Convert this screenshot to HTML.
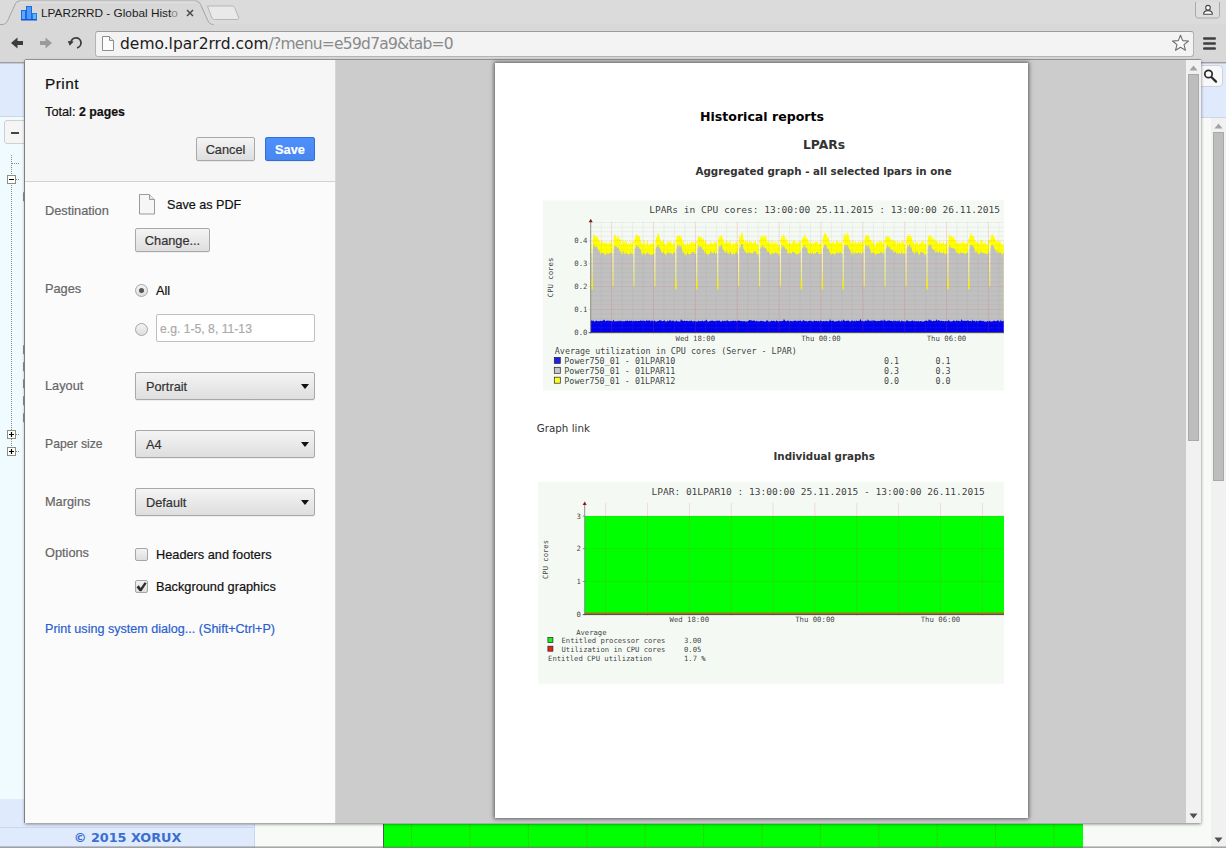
<!DOCTYPE html>
<html>
<head>
<meta charset="utf-8">
<title>LPAR2RRD - Global Historical reports</title>
<style>
*{box-sizing:border-box;margin:0;padding:0}
html,body{width:1226px;height:848px;overflow:hidden}
body{position:relative;background:#f7faf7;font-family:"DejaVu Sans","Liberation Sans",sans-serif;color:#222}
.abs{position:absolute}
/* ---------- browser chrome ---------- */
#tabbar{left:0;top:0;width:1226px;height:25px;background:#dbdbdb}
#toolbar{left:0;top:24px;width:1226px;height:39px;background:#d8d8d8}
#chromeline{left:0;top:62px;width:1226px;height:1px;background:#9f9f9f;box-shadow:0 1px 0 rgba(140,140,150,.35)}
#tabtxt{left:41px;top:5px;font-family:"Liberation Sans","DejaVu Sans",sans-serif;font-size:11.8px;line-height:16px;color:#1c1c1c;white-space:nowrap}
#urlbox{left:95px;top:31px;width:1099px;height:26px;background:#f3f3f3;border:1px solid #b3b3b3;border-top-color:#9c9c9c;border-radius:3px}
#url{left:120px;top:33px;font-size:15.5px;line-height:22px;color:#1c1c1c;white-space:nowrap;letter-spacing:0}
#url span{color:#8a8a8a;letter-spacing:-.75px}
/* ---------- page behind ---------- */
#bg-left-top{left:0;top:60px;width:25px;height:57px;background:#dfeafc;border-bottom:1px solid #c9d6ef}
#bg-left{left:0;top:118px;width:25px;height:681px;background:#effbff}
#bg-left-bot{left:0;top:799px;width:25px;height:25px;background:#dfeafc}
#foot-l{left:0;top:824px;width:255px;height:24px;background:linear-gradient(#dfeafc 3px,#c9d6ef 3px,#c9d6ef 4px,#dfeafc 4px);border-right:1px solid #c9d6ef}
#foot-txt{left:0;top:830px;width:255px;text-align:center;font-size:12.8px;font-weight:bold;color:#3a6fd0;line-height:16px}
#foot-green{left:383px;top:824px;width:700px;height:24px;background:#00ff00}
#bg-right-top{left:1200px;top:60px;width:26px;height:57px;background:#dfeafc}
/* ---------- dialog ---------- */
#dlg{left:25px;top:60px;width:1176px;height:763px;background:#ccc;box-shadow:0 1px 3px rgba(0,0,0,.5),-1px 0 0 #9c9ca4,0 -1px 0 #9f9f9f}
#side{left:0;top:0;width:311px;height:763px;background:#fbfbfb;border-right:1px solid #d6d6d6}
#sidehead{left:0;top:0;width:310px;height:122px;background:#f6f6f6;border-bottom:1px solid #d2d2d2}
.btn.t{margin-top:0;height:24px;border:1px solid #a8a8a8;border-radius:2px;background:linear-gradient(#f4f4f4,#dedede);text-align:center;line-height:24px;box-shadow:0 1px 0 rgba(0,0,0,.05)}
#save.t{color:#fff;font-weight:bold;background:linear-gradient(#4d90fe,#4787ed);border-color:#2f6ce0}
.sel.t{margin-top:0;left:110px;width:180px;height:28px;border:1px solid #a8a8a8;border-radius:2px;background:linear-gradient(#f4f4f4,#dedede);line-height:27px;padding-left:10px;color:#333;box-shadow:0 1px 0 rgba(0,0,0,.05)}
.sel:after{content:"";position:absolute;right:5px;top:11px;border:4.5px solid transparent;border-top:5px solid #111;border-bottom:none}
/* preview */
#paper{left:470px;top:3px;width:533px;height:755px;background:#fff;box-shadow:0 0 4px 1px rgba(0,0,0,.55)}
.doc{font-family:"DejaVu Sans","Liberation Sans",sans-serif;white-space:nowrap;color:#333}
.mono{font-family:"DejaVu Sans Mono","Liberation Mono",monospace;white-space:nowrap;color:#111}

.t{position:absolute;margin-top:1px;-webkit-text-stroke:.2px;white-space:nowrap;font-family:"Liberation Sans","DejaVu Sans",sans-serif;font-size:12.75px;line-height:16px;color:#1f1f1f}
.g{color:#666}
.cb{position:absolute;width:13px;height:13px;border:1px solid #a6a6a6;border-radius:2px;background:linear-gradient(#f3f3f3,#dedede)}
.rd{position:absolute;width:13px;height:13px;border:1px solid #a6a6a6;border-radius:50%;background:linear-gradient(#f3f3f3,#dedede)}
</style>
</head>
<body>
<!-- page behind the dialog -->
<div class="abs" id="bg-left-top"></div>
<div class="abs" id="bg-left"></div>
<div class="abs" id="bg-left-bot"></div>
<div class="abs" id="bg-right-top"></div>
<div class="abs" id="foot-l"></div>
<div class="abs" id="foot-txt">© 2015 XORUX</div>
<div class="abs" id="foot-green"></div>
<svg class="abs" style="left:0;top:60px" width="26" height="764" viewBox="0 60 26 764">
  <!-- collapse button -->
  <rect x="4.500" y="120.500" width="24" height="23" rx="2.500" fill="#f5f5f5" stroke="#cfcfcf"/>
  <rect x="11" y="132" width="8" height="2" fill="#444"/>
  <!-- tree lines -->
  <path d="M11.500 155V456M12 163.500H20M16 179.500H20M16 434.500H20M16 451.500H20" stroke="#8a8a8a" stroke-width="1" stroke-dasharray="1 1" fill="none"/>
  <g fill="#fff" stroke="#8e8e7c"><rect x="7.500" y="175.500" width="8" height="8"/><rect x="7.500" y="430.500" width="8" height="8"/><rect x="7.500" y="447.500" width="8" height="8"/></g>
  <path d="M9 179.500H14M9 434.500H14M11.500 432V437M9 451.500H14M11.500 449V454" stroke="#000" stroke-width="1.200" fill="none"/>
  <!-- hidden checkboxes edges -->
  <path d="M25.500 192.5H23.500V201.0H25.500M25.500 345.5H23.500V354.0H25.500M25.500 362.5H23.500V371.0H25.500M25.500 379.5H23.500V388.0H25.500M25.500 396.5H23.500V405.0H25.500M25.500 413.5H23.500V422.0H25.500" stroke="#8c8c8c" fill="#e8e8e8"/>
</svg>
<svg class="abs" style="left:383px;top:824px" width="700" height="24" viewBox="383 824 700 24">
  <path d="M411.6 824V848M470.0 824V848M528.4 824V848M586.8 824V848M645.2 824V848M703.6 824V848M762.0 824V848M820.4 824V848M878.8 824V848M937.2 824V848M995.6 824V848M1054.0 824V848" stroke="#b05020" stroke-opacity=".55" stroke-width="1" stroke-dasharray="1 1.500" fill="none"/>
  <path d="M383.500 824V848" stroke="#555" stroke-width="1"/>
</svg>
<!-- right strip -->
<div class="abs" style="left:1200px;top:117px;width:26px;height:1px;background:#c9d6ef"></div>
<div class="abs" style="left:1211px;top:118px;width:15px;height:730px;background:#f1f1f1"></div>
<div class="abs" style="left:1213px;top:132px;width:11px;height:349px;background:#bdbdbd;border:1px solid #a9a9a9"></div>
<svg class="abs" style="left:1200px;top:60px" width="26" height="788" viewBox="1200 60 26 788">
  <rect x="1198.500" y="65.500" width="24" height="21" rx="3.500" fill="#f8f8f8" stroke="#d2d2d2"/>
  <circle cx="1208.500" cy="74" r="3.700" fill="#fdfdfd" stroke="#2a2a2a" stroke-width="1.700"/>
  <path d="M1211.600 77.200L1216 81.600" stroke="#2a2a2a" stroke-width="2.300" stroke-linecap="round"/>
  <path d="M1214.500 128.500L1218.500 123.500L1222.500 128.500Z" fill="#a3a3a3"/>
  <path d="M1214.500 837.500L1218.500 842.500L1222.500 837.500Z" fill="#505050"/>
</svg>
<div class="abs" style="left:0;top:846px;width:1226px;height:2px;background:linear-gradient(rgba(120,120,120,.25),rgba(110,110,110,.7))"></div>

<!-- browser chrome -->
<div class="abs" id="tabbar"></div>
<div class="abs" id="toolbar"></div>
<svg class="abs" style="left:0;top:0" width="260" height="26" viewBox="0 0 260 26">
  <path d="M0 24.5 L2 24.5 C5.5 24.5 6.8 22.5 7.8 20.3 L15 4.5 C16 2 17.5 1 20 1 L195.5 1 C198 1 199.5 2 200.5 4.5 L207.7 20.3 C208.7 22.5 210 24.5 213.500 24.500 L260 24.5 L260 26 L0 26 Z" fill="#d8d8d8" stroke="none"/>
  <path d="M0 24.5 L2 24.5 C5.5 24.5 6.8 22.5 7.8 20.3 L15 4.5 C16 2 17.5 1 20 1 L195.5 1 C198 1 199.5 2 200.5 4.5 L207.7 20.3 C208.7 22.5 210 24.5 213.500 24.500" fill="none" stroke="#a4a4a4" stroke-width="1"/>
  <path d="M20 2 L195.5 2" stroke="#e9e9e9" stroke-width="1" fill="none"/>
  <!-- new tab button -->
  <path d="M207.500 6 L231.500 6 C233.500 6 234.500 7 235 8.500 L238.500 17 C239 18.500 238.500 19.500 237 19.500 L214.500 19.500 C213 19.500 212 18.500 211.500 17 Z" fill="#e9e9e9" stroke="#b5b5b5" stroke-width="1"/>
  <!-- favicon -->
  <g>
    <rect x="21.500" y="10.500" width="4" height="9" fill="#5aa9ff" stroke="#1e6be0"/>
    <rect x="26.500" y="6.500" width="5" height="13" fill="#4f9cff" stroke="#1e6be0"/>
    <rect x="32.500" y="13.500" width="4" height="6" fill="#5ab4ff" stroke="#1e7fe0"/>
    <rect x="21" y="19" width="16" height="1.500" fill="#1553d8"/>
  </g>
  <!-- close x -->
  <path d="M187 10 L193 16 M193 10 L187 16" stroke="#4a4a4a" stroke-width="1.500" fill="none"/>
</svg>
<div class="abs" id="tabtxt">LPAR2RRD - Global Hist<span style="color:#8a8a8a">o</span></div>
<div class="abs" id="chromeline"></div>
<div class="abs" id="urlbox"></div>
<svg class="abs" style="left:0;top:28px" width="120" height="32" viewBox="0 28 120 32">
  <!-- back -->
  <path d="M11 43 L17.500 37.500 L17.500 41 L23 41 L23 45 L17.500 45 L17.500 48.500 Z" fill="#3c3c3c"/>
  <!-- forward (disabled) -->
  <path d="M52 43 L45.500 37.500 L45.500 41 L40 41 L40 45 L45.500 45 L45.500 48.500 Z" fill="#9b9b9b"/>
  <!-- reload -->
  <path d="M71 42.500 A5 5 0 1 1 77 47.800" fill="none" stroke="#3c3c3c" stroke-width="1.800"/>
  <path d="M67.800 41 L73.800 41.500 L69.700 45.800 Z" fill="#3c3c3c"/>
  <!-- page icon -->
  <path d="M102.500 36.500 L109.500 36.500 L113.500 40.500 L113.500 50.500 L102.500 50.500 Z" fill="#fdfdfd" stroke="#8d8d8d"/>
  <path d="M109.500 36.500 L109.500 40.500 L113.500 40.500" fill="#e6e6e6" stroke="#8d8d8d"/>
</svg>
<div class="abs" id="url">demo.lpar2rrd.com<span>/?menu=e59d7a9&amp;tab=0</span></div>
<svg class="abs" style="left:1160px;top:0" width="66" height="60" viewBox="1160 0 66 60">
  <!-- star -->
  <path d="M1180.500 35.300 L1182.700 40.600 L1188.500 41 L1184 44.700 L1185.500 50.300 L1180.500 47.200 L1175.500 50.300 L1177 44.700 L1172.500 41 L1178.300 40.600 Z" fill="#fafafa" stroke="#6e6e6e" stroke-width="1.100" stroke-linejoin="round"/>
  <!-- menu -->
  <g fill="#3f3f3f"><rect x="1203" y="37.200" width="13" height="2.600" rx="1.200"/><rect x="1203" y="42.200" width="13" height="2.600" rx="1.200"/><rect x="1203" y="47.200" width="13" height="2.600" rx="1.200"/></g>
  <!-- user button -->
  <path d="M1195.500 2 L1195.500 15 C1195.500 17 1196.500 18 1198.500 18 L1216.500 18 C1218.500 18 1219.500 17 1219.500 15 L1219.500 2" fill="#dedede" stroke="#a9a9a9"/>
  <circle cx="1208" cy="7.700" r="2.300" fill="#fff" stroke="#4a4a4a" stroke-width="1.100"/>
  <path d="M1203.600 14.300 C1203.600 11.500 1205 10.600 1208 10.600 C1211 10.600 1212.400 11.500 1212.400 14.300 Z" fill="#fff" stroke="#4a4a4a" stroke-width="1.100"/>
</svg>

<!-- print dialog -->
<div class="abs" id="dlg">
  <div class="abs" id="side">
    <div class="abs" id="sidehead"></div>
    <div class="t" style="left:20px;top:14px;font-size:15.4px;letter-spacing:.45px;line-height:20px;color:#111;margin-top:0">Print</div>
    <div class="t" style="left:20px;top:43px;color:#111">Total: <b style="font-size:12.3px">2 pages</b></div>
    <div class="abs btn t" style="left:171px;top:77px;width:59px;color:#333">Cancel</div>
    <div class="abs btn t" id="save" style="left:240px;top:77px;width:50px">Save</div>
    <div class="t g" style="left:20px;top:142px">Destination</div>
    <svg class="abs" style="left:113px;top:134px" width="18" height="21" viewBox="0 0 18 21"><path d="M1.5 .5h10l5 5v14.5h-15z" fill="#f6f6f6" stroke="#9a9a9a"/><path d="M11.5 .5v5h5" fill="#e4e4e4" stroke="#9a9a9a"/></svg>
    <div class="t" style="left:142px;top:136px;font-size:12.6px;color:#111">Save as PDF</div>
    <div class="abs btn t" style="left:110px;top:168px;width:75px;color:#333">Change...</div>
    <div class="t g" style="left:20px;top:220px">Pages</div>
    <div class="rd" style="left:110px;top:224px"></div><div class="abs" style="left:114px;top:228px;width:5px;height:5px;border-radius:50%;background:#555"></div>
    <div class="t" style="left:131px;top:222px;color:#111">All</div>
    <div class="rd" style="left:110px;top:263px"></div>
    <div class="abs" style="left:131px;top:254px;width:159px;height:28px;background:#fff;border:1px solid #bfbfbf;border-radius:2px"></div>
    <div class="t" style="left:135px;top:260px;color:#aaa;font-size:12.2px">e.g. 1-5, 8, 11-13</div>
    <div class="t g" style="left:20px;top:317px">Layout</div>
    <div class="abs sel t" style="top:312px">Portrait</div>
    <div class="t g" style="left:20px;top:375px;font-size:12.2px">Paper size</div>
    <div class="abs sel t" style="top:370px">A4</div>
    <div class="t g" style="left:20px;top:433px">Margins</div>
    <div class="abs sel t" style="top:428px">Default</div>
    <div class="t g" style="left:20px;top:484px">Options</div>
    <div class="cb" style="left:110px;top:488px"></div>
    <div class="t" style="left:131px;top:486px;color:#111">Headers and footers</div>
    <div class="cb" style="left:110px;top:520px"></div>
    <svg class="abs" style="left:110px;top:520px" width="13" height="13" viewBox="0 0 13 13"><path d="M1.5 7.2L3.7 5.2L5.7 7.9L9.6 2.2L11.7 3.2L6.4 11.2L4.8 11.2Z" fill="#2e2e2e"/></svg>
    <div class="t" style="left:131px;top:518px;color:#111">Background graphics</div>
    <div class="t" style="left:20px;top:560px;color:#2b5fcf;font-size:12.58px">Print using system dialog... (Shift+Ctrl+P)</div>

  </div>
  <div class="abs" id="paper"></div>
  <!-- preview scrollbar (dialog coords: page x-25, y-60) -->
  <div class="abs" style="left:1161px;top:0;width:15px;height:763px;background:#f1f1f1"></div>
  <div class="abs" style="left:1163px;top:14px;width:11px;height:367px;background:#bdbdbd;border:1px solid #a9a9a9"></div>
  <svg class="abs" style="left:1161px;top:0" width="15" height="763" viewBox="0 0 15 763">
    <path d="M3.500 10.500L7.500 5.500L11.500 10.500Z" fill="#a3a3a3"/>
    <path d="M3.500 753.500L7.500 758.500L11.500 753.500Z" fill="#505050"/>
  </svg>
</div>
<!--DOC-->
<div class="abs doc" style="left:700px;top:109px;font-size:12.56px;line-height:16px;font-weight:bold;color:#000">Historical reports</div>
<div class="abs doc" style="left:803px;top:137px;font-size:12.3px;line-height:16px;font-weight:bold">LPARs</div>
<div class="abs doc" style="left:695.5px;top:164px;font-size:10.3px;line-height:14px;font-weight:bold">Aggregated graph - all selected lpars in one</div>
<div class="abs doc" style="left:536.8px;top:421px;font-size:10.3px;line-height:14px">Graph link</div>
<div class="abs doc" style="left:773.5px;top:449px;font-size:10.3px;line-height:14px;font-weight:bold">Individual graphs</div>
<!--/DOC-->
<!--GRAPHS-->
<svg class="abs" style="left:543px;top:200px" width="461" height="191" viewBox="543 200 461 191">
<rect x="543" y="200.4" width="461" height="190.2" fill="#f4f9f4"/>
<defs><linearGradient id="dipg" x1="0" y1="0" x2="0" y2="1"><stop offset="0" stop-color="#fbfbe6"/><stop offset="1" stop-color="#eeea58"/></linearGradient></defs>
<polygon points="590.7,332.4 590.7,245.2 591.4,242.4 592.1,246.3 592.8,239.9 593.5,235 594.2,233.9 594.9,235.5 595.6,237.2 596.3,236.7 597,235.7 597.7,237.4 598.4,238.7 599.1,240.8 599.8,241.8 600.5,244.3 601.2,240.5 601.9,240.4 602.6,241.9 603.3,242.8 604,243.3 604.7,243 605.4,242.8 606.1,243 606.8,241.5 607.5,244.7 608.2,244.2 608.9,242.6 609.6,242.4 610.3,244.4 611,239.6 611.7,242.6 612.4,246 613.1,244.2 613.8,238.3 614.5,235.3 615.2,233.8 615.9,237 616.6,237.3 617.3,239.5 618,234.8 618.7,237 619.4,239.6 620.1,239.1 620.8,238.9 621.5,245.8 622.2,244 622.9,238.5 623.6,241.7 624.3,242.4 625,239.8 625.7,243.4 626.4,240.3 627.1,243.8 627.8,244.4 628.5,243.1 629.2,243.6 629.9,245.3 630.6,238.7 631.3,244.1 632,243.4 632.7,242 633.4,241.6 634.1,241.9 634.8,238.8 635.5,237.5 636.2,234.1 636.9,234.7 637.6,236.3 638.3,235.9 639,235.8 639.7,236.6 640.4,239.4 641.1,241.7 641.8,244.4 642.5,243 643.2,245.7 643.9,239 644.6,241.7 645.3,244.8 646,246 646.7,243.1 647.4,240.1 648.1,242.3 648.8,246.3 649.5,244 650.2,243.4 650.9,244.8 651.6,243.3 652.3,243 653,241.1 653.7,244.8 654.4,245.7 655.1,243 655.8,239.2 656.5,236.1 657.2,238.2 657.9,232.3 658.6,233.7 659.3,236.2 660,239.1 660.7,241.7 661.4,240.7 662.1,241.8 662.8,241.4 663.5,238.5 664.2,244 664.9,242.7 665.6,245.3 666.3,245.8 667,241.6 667.7,242.4 668.4,239.8 669.1,244.2 669.8,241.5 670.5,241.3 671.2,241.5 671.9,244.4 672.6,243.9 673.3,244.1 674,241.1 674.7,242.9 675.4,245.8 676.1,240.2 676.8,236.4 677.5,235.5 678.2,236.1 678.9,236.4 679.6,234.5 680.3,237.6 681,235.3 681.7,237.9 682.4,240.6 683.1,243.9 683.8,239.5 684.5,245.8 685.2,245.7 685.9,242.9 686.6,246.5 687.3,241.5 688,242.8 688.7,245.1 689.4,242.7 690.1,245.1 690.8,241.9 691.5,241.8 692.2,241.8 692.9,243.3 693.6,241.3 694.3,244.5 695,242.4 695.7,242.5 696.4,240.6 697.1,242.4 697.8,238.1 698.5,235.2 699.2,236.2 699.9,238.7 700.6,236.3 701.3,237.5 702,237.3 702.7,240.8 703.4,237.5 704.1,240.4 704.8,243 705.5,239.5 706.2,241.7 706.9,244.7 707.6,243.5 708.3,244.1 709,245.2 709.7,242.9 710.4,241.9 711.1,242.5 711.8,243.6 712.5,243.8 713.2,244.6 713.9,242.5 714.6,241.6 715.3,242 716,243 716.7,242.3 717.4,245.8 718.1,240.5 718.8,235.7 719.5,238.5 720.2,235.1 720.9,237.3 721.6,234.4 722.3,237.3 723,237.9 723.7,242 724.4,242.1 725.1,244.1 725.8,241.9 726.5,239.6 727.2,242.4 727.9,242.7 728.6,242 729.3,243.2 730,239.7 730.7,241.9 731.4,245.2 732.1,245.8 732.8,242.8 733.5,242.6 734.2,244.7 734.9,243.1 735.6,243.1 736.3,241.6 737,242.6 737.7,244.9 738.4,244.2 739.1,239.9 739.8,234 740.5,238.6 741.2,233.5 741.9,232.3 742.6,232.8 743.3,239 744,240 744.7,242.3 745.4,240.6 746.1,242.8 746.8,240.7 747.5,241.2 748.2,243.8 748.9,242.2 749.6,239.9 750.3,241.4 751,242.6 751.7,241.5 752.4,244.1 753.1,242.6 753.8,242.8 754.5,242.4 755.2,240.2 755.9,242.3 756.6,244.4 757.3,244.4 758,242.7 758.7,246.6 759.4,240.9 760.1,238.3 760.8,235.8 761.5,238.4 762.2,235.3 762.9,235.6 763.6,239.2 764.3,234.8 765,238.2 765.7,234.8 766.4,237 767.1,242.6 767.8,241.6 768.5,242.4 769.2,239.5 769.9,244.7 770.6,243 771.3,240.6 772,245 772.7,239.3 773.4,244.9 774.1,240.9 774.8,244.6 775.5,242.5 776.2,241.3 776.9,244.9 777.6,240.5 778.3,246.3 779,245.5 779.7,245.1 780.4,240.3 781.1,239.4 781.8,234.4 782.5,238 783.2,233.5 783.9,236.2 784.6,234.9 785.3,240.4 786,238.7 786.7,238.4 787.4,241.3 788.1,243.7 788.8,242.9 789.5,242.8 790.2,242.7 790.9,242.3 791.6,244.9 792.3,242 793,242.2 793.7,239.2 794.4,240.1 795.1,241.3 795.8,243.7 796.5,242.3 797.2,242.5 797.9,245.2 798.6,240.8 799.3,243.3 800,239.7 800.7,241.9 801.4,243 802.1,238.7 802.8,238.2 803.5,237 804.2,236.9 804.9,232.6 805.6,236.7 806.3,238.7 807,237.7 807.7,239.4 808.4,241.3 809.1,241.5 809.8,244.8 810.5,241.2 811.2,243.4 811.9,242.5 812.6,242.8 813.3,244 814,243.3 814.7,241.9 815.4,241.9 816.1,242.1 816.8,241.5 817.5,241.7 818.2,243.1 818.9,245.2 819.6,242.5 820.3,244.9 821,240.7 821.7,245.2 822.4,241.4 823.1,237.3 823.8,235.8 824.5,232.3 825.2,234 825.9,233.2 826.6,234.6 827.3,237.9 828,237.7 828.7,236.9 829.4,242.3 830.1,241.4 830.8,244.1 831.5,243.6 832.2,242.5 832.9,242.3 833.6,241.1 834.3,243.7 835,244 835.7,242.3 836.4,239.4 837.1,242 837.8,241 838.5,243.3 839.2,242 839.9,243 840.6,242 841.3,242.1 842,243.7 842.7,243.5 843.4,238.3 844.1,234.4 844.8,232.7 845.5,235.9 846.2,237.8 846.9,231.7 847.6,233.8 848.3,235 849,236.5 849.7,240.6 850.4,242 851.1,240.2 851.8,244.6 852.5,242.2 853.2,240 853.9,243 854.6,243.5 855.3,240.3 856,243.5 856.7,242.8 857.4,243.8 858.1,242.1 858.8,241.4 859.5,243.1 860.2,241.1 860.9,241.7 861.6,244.4 862.3,241.4 863,241.7 863.7,242 864.4,242 865.1,236.5 865.8,234.7 866.5,236.4 867.2,234.2 867.9,237 868.6,234.6 869.3,236.9 870,239.9 870.7,240.3 871.4,240.8 872.1,244.5 872.8,240.4 873.5,243.4 874.2,240.3 874.9,245.8 875.6,246.6 876.3,242 877,242.4 877.7,241.7 878.4,243.6 879.1,242 879.8,240.4 880.5,241.3 881.2,241.2 881.9,242.2 882.6,243.1 883.3,244.6 884,239.8 884.7,242.1 885.4,237.5 886.1,236.3 886.8,237.6 887.5,235.9 888.2,236.5 888.9,238.2 889.6,235.7 890.3,238.7 891,239.6 891.7,241.9 892.4,237.9 893.1,241.2 893.8,240.5 894.5,241.9 895.2,240.3 895.9,243.1 896.6,245.9 897.3,240.5 898,241.2 898.7,244.1 899.4,242.4 900.1,240.8 900.8,244.5 901.5,242.7 902.2,239.3 902.9,242.9 903.6,240.8 904.3,246 905,244.2 905.7,243.1 906.4,240.8 907.1,235 907.8,236.5 908.5,235.5 909.2,236.4 909.9,232.7 910.6,238.3 911.3,235.9 912,237.4 912.7,242.9 913.4,242.1 914.1,240.8 914.8,246.3 915.5,243.6 916.2,243.3 916.9,241.4 917.6,242.2 918.3,245.3 919,244.6 919.7,242.8 920.4,243 921.1,243.4 921.8,239.7 922.5,242.8 923.2,239.6 923.9,242.8 924.6,244.8 925.3,242.9 926,242.4 926.7,244.7 927.4,242 928.1,235.5 928.8,238 929.5,233.8 930.2,236.5 930.9,235.1 931.6,238 932.3,236.5 933,241.7 933.7,238.6 934.4,237.6 935.1,241.5 935.8,241.2 936.5,241.1 937.2,240.9 937.9,243.8 938.6,244.4 939.3,239.9 940,243.1 940.7,242.9 941.4,243.5 942.1,243.4 942.8,243.1 943.5,240.7 944.2,244 944.9,244.6 945.6,244.1 946.3,241.4 947,242.9 947.7,243.4 948.4,240.8 949.1,234 949.8,235 950.5,237 951.2,236.2 951.9,236.2 952.6,237.4 953.3,237 954,237.8 954.7,240.1 955.4,239 956.1,242.5 956.8,241.8 957.5,243.7 958.2,243.9 958.9,241.5 959.6,243.8 960.3,243 961,242.3 961.7,244.8 962.4,241.2 963.1,242.4 963.8,241.4 964.5,243.2 965.2,244.2 965.9,242.3 966.6,243.6 967.3,243.2 968,242 968.7,238.8 969.4,238.3 970.1,236.5 970.8,232.5 971.5,233.4 972.2,236.9 972.9,235.2 973.6,236 974.3,238 975,242.2 975.7,240.5 976.4,242.6 977.1,241.7 977.8,242.5 978.5,242.7 979.2,242.8 979.9,244.8 980.6,239 981.3,239.3 982,243.1 982.7,240.1 983.4,244 984.1,244.1 984.8,242.8 985.5,241.7 986.2,244.2 986.9,244.5 987.6,245.2 988.3,239.7 989,240.3 989.7,241.3 990.4,240.3 991.1,233.9 991.8,237 992.5,233.3 993.2,235.6 993.9,237 994.6,237.5 995.3,239.7 996,241.1 996.7,242.2 997.4,237.9 998.1,243.3 998.8,241.2 999.5,242.3 1000.2,240.3 1000.9,243.5 1001.6,244.7 1002.3,246.1 1003,242.1 1003.7,245 1003.7,332.4" fill="#ffff00"/>
<polygon points="590.7,332.4 590.7,254 591.4,253 592.1,255.1 592.8,249.3 593.5,245.1 594.2,243.5 594.9,247.3 595.6,247.2 596.3,246 597,246.5 597.7,248.7 598.4,250.8 599.1,249.7 599.8,252.3 600.5,255.2 601.2,251.4 601.9,252.8 602.6,253.3 603.3,252.5 604,253.7 604.7,254.7 605.4,254.9 606.1,255.1 606.8,251.7 607.5,253.8 608.2,254.6 608.9,252.8 609.6,253.8 610.3,253.1 611,251.3 611.7,253.7 612.4,255.2 613.1,253.3 613.8,250.4 614.5,245.2 615.2,246.3 615.9,245.9 616.6,246.4 617.3,248.5 618,247.3 618.7,247 619.4,251.3 620.1,251.7 620.8,250.4 621.5,254.4 622.2,255.3 622.9,251.1 623.6,251.1 624.3,254.6 625,251.6 625.7,255.1 626.4,252 627.1,253.9 627.8,253.6 628.5,254.9 629.2,254.8 629.9,253.9 630.6,251 631.3,253.5 632,254.3 632.7,254.3 633.4,253.8 634.1,252.6 634.8,248.1 635.5,248 636.2,244.7 636.9,245.4 637.6,246.9 638.3,246.2 639,247.1 639.7,249 640.4,249 641.1,250.7 641.8,253.9 642.5,255.1 643.2,254.7 643.9,251.4 644.6,253.6 645.3,254.7 646,254.6 646.7,252.9 647.4,252.6 648.1,251.8 648.8,255.3 649.5,253.5 650.2,254.8 650.9,255 651.6,255.1 652.3,255.1 653,253.4 653.7,254.2 654.4,255 655.1,252.6 655.8,247.8 656.5,246.8 657.2,247.1 657.9,244.2 658.6,246.2 659.3,247.3 660,248.1 660.7,250.8 661.4,251.9 662.1,252.1 662.8,253.8 663.5,251 664.2,254 664.9,253.3 665.6,255.4 666.3,255.3 667,252.8 667.7,252.2 668.4,250.9 669.1,255.3 669.8,252.1 670.5,253.1 671.2,252.8 671.9,254.4 672.6,255 673.3,252.6 674,251.8 674.7,252.4 675.4,255.1 676.1,250.3 676.8,247.5 677.5,245 678.2,244.6 678.9,247.7 679.6,244.9 680.3,246.8 681,245.6 681.7,247.5 682.4,251.4 683.1,252.9 683.8,250.9 684.5,254.4 685.2,255.4 685.9,254.8 686.6,255.4 687.3,251.2 688,253.8 688.7,253.8 689.4,255 690.1,254.3 690.8,253.7 691.5,252.6 692.2,252.2 692.9,252 693.6,251.2 694.3,254.1 695,252.5 695.7,254.7 696.4,253.2 697.1,251.2 697.8,247.7 698.5,245.4 699.2,246.1 699.9,247.7 700.6,245.7 701.3,247.9 702,245.9 702.7,251.2 703.4,249.8 704.1,249.9 704.8,254.3 705.5,251.1 706.2,253.4 706.9,254.4 707.6,254.9 708.3,254.9 709,253.7 709.7,254.1 710.4,251.4 711.1,251.1 711.8,253.2 712.5,252.4 713.2,253.9 713.9,251.8 714.6,251 715.3,254.4 716,253.2 716.7,252.4 717.4,254.5 718.1,252.6 718.8,245.5 719.5,247.1 720.2,244.9 720.9,247.2 721.6,243.7 722.3,247.6 723,250.1 723.7,250.6 724.4,250.7 725.1,253.6 725.8,251.5 726.5,251.1 727.2,254 727.9,251.3 728.6,254.4 729.3,253.7 730,251.2 730.7,251.7 731.4,254 732.1,254.6 732.8,255.3 733.5,251.4 734.2,255 734.9,254.4 735.6,252 736.3,251.6 737,252.1 737.7,254.8 738.4,253.6 739.1,248.8 739.8,246.3 740.5,247.8 741.2,243.5 741.9,244 742.6,243.9 743.3,248.3 744,249.3 744.7,251.5 745.4,251.3 746.1,253.6 746.8,252.1 747.5,253.6 748.2,254 748.9,251.5 749.6,252.1 750.3,253.5 751,253.3 751.7,252.5 752.4,253.8 753.1,253.1 753.8,251.8 754.5,251.1 755.2,251.2 755.9,251.7 756.6,253.6 757.3,254.5 758,254.9 758.7,255.3 759.4,251.6 760.1,249.2 760.8,246.1 761.5,247.9 762.2,244.5 762.9,245.8 763.6,247.9 764.3,246.5 765,248.2 765.7,247.4 766.4,249.5 767.1,251.7 767.8,251.5 768.5,252 769.2,251.7 769.9,254.5 770.6,255.3 771.3,252.3 772,254.9 772.7,251.5 773.4,255 774.1,251.8 774.8,253.8 775.5,252.1 776.2,252.5 776.9,254 777.6,252.6 778.3,254.9 779,255.4 779.7,254.4 780.4,252.6 781.1,250.6 781.8,244 782.5,247.9 783.2,245 783.9,246.9 784.6,246.6 785.3,249.5 786,249.8 786.7,248.1 787.4,252.7 788.1,254.1 788.8,251.8 789.5,254.4 790.2,252.3 790.9,252.9 791.6,254.2 792.3,251.4 793,252 793.7,251.4 794.4,252.6 795.1,253.3 795.8,253.5 796.5,254.5 797.2,254.8 797.9,253.9 798.6,252.3 799.3,255.2 800,251.7 800.7,251.3 801.4,254.8 802.1,248.4 802.8,247.5 803.5,246.5 804.2,246.7 804.9,243.6 805.6,248.4 806.3,248.1 807,246.8 807.7,251.9 808.4,253.1 809.1,253.4 809.8,254.1 810.5,252.3 811.2,255.1 811.9,252.6 812.6,251.4 813.3,254.5 814,253.7 814.7,253 815.4,253.9 816.1,252.4 816.8,251.9 817.5,251.4 818.2,252.2 818.9,254.3 819.6,254 820.3,255 821,251 821.7,254.6 822.4,253.1 823.1,247.7 823.8,247.3 824.5,243.8 825.2,246.1 825.9,244.4 826.6,245.7 827.3,249.3 828,248 828.7,249.2 829.4,252.3 830.1,252.1 830.8,254.7 831.5,255 832.2,253.1 832.9,253.6 833.6,253.7 834.3,253.8 835,255.4 835.7,253.8 836.4,251.2 837.1,253.7 837.8,251.7 838.5,254.4 839.2,251.7 839.9,252.9 840.6,251.6 841.3,253.5 842,254.2 842.7,253.5 843.4,250.2 844.1,246.3 844.8,245.1 845.5,245 846.2,246.9 846.9,243.8 847.6,246 848.3,246.3 849,248.6 849.7,249.6 850.4,251 851.1,252.2 851.8,255.4 852.5,252.4 853.2,251.1 853.9,255.3 854.6,253.9 855.3,251.3 856,253.9 856.7,253 857.4,253.5 858.1,251.7 858.8,253.1 859.5,253.9 860.2,252.5 860.9,251.4 861.6,255.4 862.3,252.4 863,252.6 863.7,252.3 864.4,250.6 865.1,246.5 865.8,244.2 866.5,246.6 867.2,245.1 867.9,247.8 868.6,244.7 869.3,247.3 870,249.3 870.7,251.6 871.4,252.9 872.1,254 872.8,252.1 873.5,252.2 874.2,252.6 874.9,254.3 875.6,255.4 876.3,254 877,253.2 877.7,253.4 878.4,253.8 879.1,253.7 879.8,252.9 880.5,252.2 881.2,251 881.9,253.5 882.6,252.7 883.3,255.4 884,251.7 884.7,251.7 885.4,249.8 886.1,248.1 886.8,247.1 887.5,245.2 888.2,246.8 888.9,247.6 889.6,246.3 890.3,247.9 891,250.4 891.7,250.5 892.4,249 893.1,251.1 893.8,253.1 894.5,251.5 895.2,251.9 895.9,251.7 896.6,254.5 897.3,252.9 898,251.3 898.7,254.9 899.4,252.5 900.1,253.4 900.8,254.4 901.5,251.3 902.2,251.9 902.9,255.2 903.6,252.4 904.3,255 905,253.3 905.7,252.4 906.4,253.1 907.1,245.3 907.8,247.5 908.5,245.9 909.2,245.1 909.9,244.7 910.6,247.9 911.3,246.4 912,249.9 912.7,252.2 913.4,251.5 914.1,253.1 914.8,255 915.5,252.1 916.2,251.8 916.9,251.6 917.6,251.3 918.3,254.6 919,255.1 919.7,254.2 920.4,251.7 921.1,252.1 921.8,251.7 922.5,253.2 923.2,251.5 923.9,253.8 924.6,255.4 925.3,254.9 926,254 926.7,255.2 927.4,250.5 928.1,244.4 928.8,246.8 929.5,244.8 930.2,245.4 930.9,244.1 931.6,246.9 932.3,248.5 933,250.8 933.7,248.8 934.4,249.9 935.1,251.3 935.8,253.5 936.5,251.7 937.2,251.1 937.9,252.6 938.6,253.5 939.3,251 940,251.7 940.7,252.5 941.4,253 942.1,253.1 942.8,254.1 943.5,251.1 944.2,253 944.9,254.1 945.6,255.1 946.3,252.8 947,253.3 947.7,254 948.4,250.7 949.1,244.5 949.8,246.7 950.5,247.3 951.2,247.7 951.9,247.7 952.6,248.6 953.3,247.6 954,248.2 954.7,249.1 955.4,249.9 956.1,252.7 956.8,251.9 957.5,253.4 958.2,253.7 958.9,251.9 959.6,254.6 960.3,252.8 961,251.6 961.7,253.5 962.4,252.9 963.1,253 963.8,252.3 964.5,253.8 965.2,255 965.9,252.8 966.6,253.4 967.3,253 968,251 968.7,251.4 969.4,248 970.1,245.7 970.8,245.1 971.5,245.1 972.2,246.6 972.9,244.4 973.6,247.2 974.3,248.1 975,251.2 975.7,252.4 976.4,251.2 977.1,251.6 977.8,254.7 978.5,252.8 979.2,255.2 979.9,253.4 980.6,251.2 981.3,251.7 982,253.2 982.7,252.2 983.4,253.2 984.1,253.8 984.8,252.9 985.5,253.6 986.2,253.8 986.9,254.4 987.6,254.7 988.3,251.6 989,251.8 989.7,253.7 990.4,249.4 991.1,244.8 991.8,246.3 992.5,244 993.2,246.8 993.9,245.8 994.6,248.7 995.3,250.2 996,250.5 996.7,252.4 997.4,249.9 998.1,254.6 998.8,252.4 999.5,252.3 1000.2,252.6 1000.9,252.1 1001.6,254.7 1002.3,255.3 1003,251.6 1003.7,253.5 1003.7,332.4" fill="#c0c0c0"/>
<rect x="591.5" y="243.1" width="1.2" height="43.5" fill="url(#dipg)"/>
<rect x="591.3" y="279.3" width="1.6" height="10.1" fill="#f6ee20"/>
<rect x="612.4" y="243.1" width="1.2" height="43.5" fill="url(#dipg)"/>
<rect x="633.3" y="243.1" width="1.2" height="43.5" fill="url(#dipg)"/>
<rect x="654.3" y="243.1" width="1.2" height="43.5" fill="url(#dipg)"/>
<rect x="675.2" y="243.1" width="1.2" height="43.5" fill="url(#dipg)"/>
<rect x="675" y="279.3" width="1.6" height="10.1" fill="#f6ee20"/>
<rect x="696.1" y="243.1" width="1.2" height="43.5" fill="url(#dipg)"/>
<rect x="695.9" y="279.3" width="1.6" height="10.1" fill="#f6ee20"/>
<rect x="717.1" y="243.1" width="1.2" height="43.5" fill="url(#dipg)"/>
<rect x="716.9" y="279.3" width="1.6" height="10.1" fill="#f6ee20"/>
<rect x="738" y="243.1" width="1.2" height="43.5" fill="url(#dipg)"/>
<rect x="758.9" y="243.1" width="1.2" height="43.5" fill="url(#dipg)"/>
<rect x="779.8" y="243.1" width="1.2" height="43.5" fill="url(#dipg)"/>
<rect x="800.8" y="243.1" width="1.2" height="43.5" fill="url(#dipg)"/>
<rect x="800.6" y="279.3" width="1.6" height="10.1" fill="#f6ee20"/>
<rect x="821.7" y="243.1" width="1.2" height="43.5" fill="url(#dipg)"/>
<rect x="821.5" y="279.3" width="1.6" height="10.1" fill="#f6ee20"/>
<rect x="842.6" y="243.1" width="1.2" height="43.5" fill="url(#dipg)"/>
<rect x="842.4" y="279.3" width="1.6" height="10.1" fill="#f6ee20"/>
<rect x="863.6" y="243.1" width="1.2" height="43.5" fill="url(#dipg)"/>
<rect x="884.5" y="243.1" width="1.2" height="43.5" fill="url(#dipg)"/>
<rect x="905.4" y="243.1" width="1.2" height="43.5" fill="url(#dipg)"/>
<rect x="926.4" y="243.1" width="1.2" height="43.5" fill="url(#dipg)"/>
<rect x="926.2" y="279.3" width="1.6" height="10.1" fill="#f6ee20"/>
<rect x="947.3" y="243.1" width="1.2" height="43.5" fill="url(#dipg)"/>
<rect x="947.1" y="279.3" width="1.6" height="10.1" fill="#f6ee20"/>
<rect x="968.2" y="243.1" width="1.2" height="43.5" fill="url(#dipg)"/>
<rect x="968" y="279.3" width="1.6" height="10.1" fill="#f6ee20"/>
<rect x="989.1" y="243.1" width="1.2" height="43.5" fill="url(#dipg)"/>
<polygon points="590.7,332.4 590.7,321.5 591.4,319.9 592.1,321.2 592.8,320.6 593.5,320.4 594.2,321.7 594.9,321.6 595.6,321 596.3,320.3 597,321.2 597.7,321.3 598.4,321 599.1,321.4 599.8,320.7 600.5,320.8 601.2,321.3 601.9,321.1 602.6,320.8 603.3,320.4 604,319.5 604.7,320.2 605.4,321.4 606.1,321.1 606.8,320.6 607.5,320.5 608.2,321.4 608.9,320 609.6,321 610.3,320.9 611,320.7 611.7,321.2 612.4,321.7 613.1,320.3 613.8,319.9 614.5,321.5 615.2,321.6 615.9,321.1 616.6,321.4 617.3,320.4 618,321.7 618.7,320.8 619.4,320.7 620.1,321.4 620.8,320.6 621.5,321 622.2,321.4 622.9,321.1 623.6,321.3 624.3,321.5 625,321.1 625.7,320.8 626.4,321.1 627.1,320.7 627.8,320.5 628.5,321.5 629.2,320.6 629.9,321 630.6,320.9 631.3,320.6 632,321.3 632.7,321.2 633.4,321.1 634.1,320.5 634.8,321.7 635.5,320.7 636.2,321 636.9,320.7 637.6,321.4 638.3,320.7 639,321.1 639.7,321 640.4,320.5 641.1,320.5 641.8,321.1 642.5,320.8 643.2,320.8 643.9,320.4 644.6,321.1 645.3,321.2 646,321.3 646.7,319.8 647.4,321 648.1,320.4 648.8,320.7 649.5,320.5 650.2,320.5 650.9,321.7 651.6,320.5 652.3,320.6 653,321.3 653.7,321.6 654.4,320.2 655.1,321.3 655.8,321.5 656.5,321.7 657.2,321.1 657.9,321.2 658.6,321.1 659.3,320.6 660,319.9 660.7,320.7 661.4,320.6 662.1,321.4 662.8,321.1 663.5,321 664.2,319.9 664.9,321.1 665.6,321.4 666.3,321.7 667,321 667.7,320.5 668.4,321.5 669.1,320.6 669.8,320.6 670.5,320.6 671.2,320.5 671.9,321.7 672.6,320.6 673.3,320.8 674,320.7 674.7,321.7 675.4,321.4 676.1,320.4 676.8,320.8 677.5,321.6 678.2,321.3 678.9,321.4 679.6,321.4 680.3,321.6 681,319.1 681.7,320.4 682.4,320.5 683.1,321 683.8,321.1 684.5,320.5 685.2,321.1 685.9,321.3 686.6,320.7 687.3,320.8 688,321.2 688.7,321.2 689.4,320.6 690.1,321.4 690.8,320.4 691.5,320.5 692.2,321.7 692.9,320.9 693.6,321.6 694.3,320.7 695,321.3 695.7,321.5 696.4,321.4 697.1,321.6 697.8,321.6 698.5,320.5 699.2,321 699.9,321.4 700.6,320.9 701.3,321.4 702,320.6 702.7,320.8 703.4,321.8 704.1,320.6 704.8,321.5 705.5,320.8 706.2,319.6 706.9,320.5 707.6,321.4 708.3,321.7 709,321.4 709.7,321.1 710.4,321.1 711.1,320.8 711.8,320.8 712.5,320.5 713.2,321.2 713.9,320.7 714.6,321.3 715.3,320.7 716,321.5 716.7,320.4 717.4,320.4 718.1,321.2 718.8,320.4 719.5,320.5 720.2,321.2 720.9,321.7 721.6,321.6 722.3,320.6 723,321.1 723.7,321.3 724.4,320.6 725.1,321.7 725.8,320.5 726.5,320.9 727.2,320 727.9,320.9 728.6,321.1 729.3,321.4 730,321.5 730.7,320.7 731.4,321.3 732.1,320.7 732.8,321 733.5,320.4 734.2,321.1 734.9,321.2 735.6,320.6 736.3,321.3 737,321.5 737.7,320.5 738.4,320.4 739.1,320.9 739.8,320.6 740.5,321.3 741.2,321 741.9,321.1 742.6,321.6 743.3,321.2 744,320.9 744.7,321.3 745.4,321.5 746.1,321.6 746.8,321.6 747.5,321.4 748.2,321 748.9,320.4 749.6,320.1 750.3,320.6 751,320.2 751.7,320.5 752.4,321.1 753.1,320.5 753.8,320.4 754.5,320.4 755.2,321.2 755.9,321.5 756.6,320.6 757.3,321.2 758,321.4 758.7,321 759.4,321.6 760.1,321.3 760.8,320.8 761.5,320.9 762.2,320.7 762.9,321.6 763.6,321.1 764.3,321.6 765,321.7 765.7,321.6 766.4,320.6 767.1,320.4 767.8,320.5 768.5,321.5 769.2,321.6 769.9,321.4 770.6,321.5 771.3,320.5 772,321 772.7,321 773.4,320.4 774.1,321.4 774.8,320.7 775.5,321.7 776.2,320.4 776.9,320.4 777.6,321.2 778.3,321.4 779,321.3 779.7,320.9 780.4,321.1 781.1,321.5 781.8,320.7 782.5,320.9 783.2,321.1 783.9,319.1 784.6,320.1 785.3,321 786,320.9 786.7,321.5 787.4,320.5 788.1,320.6 788.8,321.1 789.5,321.7 790.2,320.6 790.9,321.2 791.6,320.9 792.3,321.7 793,320.5 793.7,321.3 794.4,320.8 795.1,320.6 795.8,320.8 796.5,320.9 797.2,321.7 797.9,320.2 798.6,320.9 799.3,320.9 800,320.5 800.7,320.5 801.4,321.7 802.1,320.6 802.8,321.6 803.5,319.8 804.2,320.8 804.9,321.1 805.6,321.2 806.3,320.8 807,321.6 807.7,321.5 808.4,321.1 809.1,321.1 809.8,320.5 810.5,321.1 811.2,320.7 811.9,321.3 812.6,321.6 813.3,321.4 814,320.5 814.7,320.7 815.4,321.3 816.1,320.7 816.8,321 817.5,321.4 818.2,320.6 818.9,321.3 819.6,321.5 820.3,320.4 821,320.7 821.7,320.9 822.4,321.7 823.1,321.1 823.8,320.9 824.5,321.2 825.2,321.4 825.9,320.8 826.6,321.1 827.3,321.2 828,321.4 828.7,321.2 829.4,320.9 830.1,319 830.8,320.7 831.5,321 832.2,320.9 832.9,320.4 833.6,320.7 834.3,321.7 835,321.2 835.7,321.4 836.4,321 837.1,321.5 837.8,320.9 838.5,320.4 839.2,320.6 839.9,321.6 840.6,321.4 841.3,320.1 842,321.4 842.7,320.9 843.4,319.2 844.1,320.7 844.8,320.4 845.5,321.4 846.2,320.7 846.9,320.7 847.6,320.7 848.3,320.6 849,320.7 849.7,321.4 850.4,321.7 851.1,321.1 851.8,320.6 852.5,320.6 853.2,321.6 853.9,320.9 854.6,320.4 855.3,321.7 856,320.6 856.7,320.7 857.4,321 858.1,321.2 858.8,320.4 859.5,321.3 860.2,319.3 860.9,319.6 861.6,321.5 862.3,320.7 863,320.9 863.7,321.5 864.4,321.6 865.1,320.5 865.8,320.7 866.5,321.2 867.2,319.1 867.9,321.6 868.6,319.8 869.3,320.5 870,321.6 870.7,320.4 871.4,320.4 872.1,321.7 872.8,320.1 873.5,320.6 874.2,320.8 874.9,320.4 875.6,320.9 876.3,320.7 877,321.7 877.7,320.8 878.4,320.9 879.1,320.7 879.8,321.3 880.5,320.6 881.2,320.6 881.9,320.5 882.6,320.5 883.3,321.4 884,319.2 884.7,320.6 885.4,320.6 886.1,321.6 886.8,320.7 887.5,320.8 888.2,320.7 888.9,320.6 889.6,320.5 890.3,320.9 891,320.8 891.7,321 892.4,321.2 893.1,321.5 893.8,320.3 894.5,321.1 895.2,321.2 895.9,320.4 896.6,321.5 897.3,320.6 898,321.7 898.7,320.4 899.4,320.4 900.1,321.5 900.8,321.7 901.5,320.5 902.2,320.8 902.9,321.6 903.6,321.3 904.3,321.3 905,321.5 905.7,321.7 906.4,320.5 907.1,320.5 907.8,320.5 908.5,321.3 909.2,321.6 909.9,321 910.6,321.2 911.3,321.3 912,320.5 912.7,320.5 913.4,321.4 914.1,320.4 914.8,321.4 915.5,321.3 916.2,321.3 916.9,321 917.6,321.5 918.3,320.7 919,321.6 919.7,321.5 920.4,321 921.1,321.2 921.8,321.3 922.5,321.7 923.2,321.4 923.9,321.5 924.6,321 925.3,320.8 926,320.8 926.7,320.6 927.4,321 928.1,321.4 928.8,319.3 929.5,320.1 930.2,321 930.9,319.4 931.6,321.1 932.3,321.6 933,321 933.7,320.5 934.4,321 935.1,321.3 935.8,320.4 936.5,319.2 937.2,320.5 937.9,321.3 938.6,319.7 939.3,320.7 940,320.5 940.7,321.4 941.4,320.5 942.1,321.2 942.8,320.9 943.5,321 944.2,321.5 944.9,321.2 945.6,321 946.3,320.9 947,321 947.7,321.4 948.4,319.6 949.1,321.4 949.8,320.4 950.5,321.7 951.2,321.2 951.9,321.4 952.6,321.3 953.3,320.6 954,320.7 954.7,320.8 955.4,321.7 956.1,320.4 956.8,320.6 957.5,321.1 958.2,321 958.9,320.6 959.6,321.3 960.3,321.6 961,320.6 961.7,319.1 962.4,321.1 963.1,320.4 963.8,321.2 964.5,320.4 965.2,321.2 965.9,320.5 966.6,320.9 967.3,320.6 968,320.6 968.7,320.8 969.4,321.2 970.1,321.1 970.8,320.9 971.5,321.7 972.2,319.4 972.9,320.9 973.6,321 974.3,320.4 975,321.5 975.7,321.5 976.4,320.6 977.1,321.3 977.8,321.4 978.5,321.3 979.2,320.5 979.9,320.9 980.6,320.6 981.3,321.3 982,320.4 982.7,321.4 983.4,320.7 984.1,321.5 984.8,321.6 985.5,321.7 986.2,321.4 986.9,321.7 987.6,320.8 988.3,321.6 989,321.5 989.7,320.4 990.4,321.4 991.1,321.4 991.8,321.4 992.5,321.6 993.2,320.7 993.9,321.3 994.6,320.6 995.3,321 996,321.7 996.7,320.8 997.4,320.7 998.1,320 998.8,321.3 999.5,321.4 1000.2,321.5 1000.9,319.4 1001.6,321.5 1002.3,321.3 1003,321 1003.7,320.8 1003.7,332.4" fill="#0000ee"/>
<path d="M590.7 327.8H1004M590.7 323.2H1004M590.7 318.7H1004M590.7 314.1H1004M590.7 304.9H1004M590.7 300.3H1004M590.7 295.8H1004M590.7 291.2H1004M590.7 282H1004M590.7 277.4H1004M590.7 272.9H1004M590.7 268.3H1004M590.7 259.1H1004M590.7 254.5H1004M590.7 250H1004M590.7 245.4H1004M590.7 236.2H1004M590.7 231.6H1004M590.7 227.1H1004M590.7 222.5H1004" stroke="#8c8c8c" stroke-opacity=".26" stroke-width=".7" stroke-dasharray="1 1" fill="none"/>
<path d="M588.7 309.5H1004M588.7 286.6H1004M588.7 263.7H1004M588.7 240.8H1004" stroke="#e05050" stroke-opacity=".38" stroke-width=".7" stroke-dasharray="1 1" fill="none"/>
<path d="M601.2 222.3V332.4M622.1 222.3V332.4M632.6 222.3V332.4M643 222.3V332.4M664 222.3V332.4M674.4 222.3V332.4M684.9 222.3V332.4M705.8 222.3V332.4M716.3 222.3V332.4M726.7 222.3V332.4M747.7 222.3V332.4M758.1 222.3V332.4M768.6 222.3V332.4M789.5 222.3V332.4M800 222.3V332.4M810.5 222.3V332.4M831.4 222.3V332.4M841.9 222.3V332.4M852.3 222.3V332.4M873.3 222.3V332.4M883.7 222.3V332.4M894.2 222.3V332.4M915.1 222.3V332.4M925.6 222.3V332.4M936 222.3V332.4M957 222.3V332.4M967.4 222.3V332.4M977.9 222.3V332.4M998.8 222.3V332.4" stroke="#8c8c8c" stroke-opacity=".26" stroke-width=".7" stroke-dasharray="1 1" fill="none"/>
<path d="M611.6 222.3V334.4M653.5 222.3V334.4M695.4 222.3V334.4M737.2 222.3V334.4M779.1 222.3V334.4M820.9 222.3V334.4M862.8 222.3V334.4M904.7 222.3V334.4M946.5 222.3V334.4M988.4 222.3V334.4" stroke="#e05050" stroke-opacity=".5" stroke-width=".7" stroke-dasharray="1 1" fill="none"/>
<path d="M590.7 220.3V333.4" stroke="#777" stroke-width=".8" fill="none"/>
<path d="M588.7 332.7H1004" stroke="#444" stroke-width=".9" fill="none"/>
<path d="M588.7 222.3L590.7 218.8L592.7 222.3Z" fill="#8b1a1a"/>
<g font-family='"DejaVu Sans Mono","Liberation Mono",monospace' fill="#222" fill-opacity=".88">
<text x="649.3" y="213" font-size="9.56">LPARs in CPU cores: 13:00:00 25.11.2015 : 13:00:00 26.11.2015</text>
<text x="587.5" y="335" font-size="7.3" text-anchor="end">0.0</text>
<text x="587.5" y="312.1" font-size="7.3" text-anchor="end">0.1</text>
<text x="587.5" y="289.2" font-size="7.3" text-anchor="end">0.2</text>
<text x="587.5" y="266.3" font-size="7.3" text-anchor="end">0.3</text>
<text x="587.5" y="243.4" font-size="7.3" text-anchor="end">0.4</text>
<text x="695.3" y="340.6" font-size="7.3" text-anchor="middle">Wed 18:00</text>
<text x="820.9" y="340.6" font-size="7.3" text-anchor="middle">Thu 00:00</text>
<text x="946.5" y="340.6" font-size="7.3" text-anchor="middle">Thu 06:00</text>
<text transform="translate(553.3 277.5) rotate(-90)" font-size="7.3" text-anchor="middle">CPU cores</text>
<text x="554.8" y="353.6" font-size="8.4">Average utilization in CPU cores (Server - LPAR)</text>
<rect x="554.3" y="357.4" width="6" height="6" fill="#0000ee" stroke="#222" stroke-width=".7"/>
<text x="564.3" y="363.7" font-size="8.4">Power750_01 - 01LPAR10</text>
<text x="883.9" y="363.7" font-size="8.4">0.1</text>
<text x="935.5" y="363.7" font-size="8.4">0.1</text>
<rect x="554.3" y="367.3" width="6" height="6" fill="#c0c0c0" stroke="#222" stroke-width=".7"/>
<text x="564.3" y="373.6" font-size="8.4">Power750_01 - 01LPAR11</text>
<text x="883.9" y="373.6" font-size="8.4">0.3</text>
<text x="935.5" y="373.6" font-size="8.4">0.3</text>
<rect x="554.3" y="377.2" width="6" height="6" fill="#ffff00" stroke="#222" stroke-width=".7"/>
<text x="564.3" y="383.5" font-size="8.4">Power750_01 - 01LPAR12</text>
<text x="883.9" y="383.5" font-size="8.4">0.0</text>
<text x="935.5" y="383.5" font-size="8.4">0.0</text>
</g></svg>
<svg class="abs" style="left:538px;top:481px" width="466" height="203" viewBox="538 481 466 203">
<rect x="538.2" y="481.8" width="466" height="201.9" fill="#f4f9f4"/>
<rect x="584.7" y="516" width="419.3" height="98.2" fill="#00ff00"/>
<rect x="584.7" y="612.6" width="419.3" height="2" fill="#b06a10"/>
<path d="M584.7 581.5H1004M584.7 548.7H1004M584.7 516H1004" stroke="#c03030" stroke-opacity=".3" stroke-width=".7" stroke-dasharray="1 1" fill="none"/>
<path d="M605.6 503.5V616.2M647.5 503.5V616.2M689.4 503.5V616.2M731.2 503.5V616.2M773.1 503.5V616.2M814.9 503.5V616.2M856.8 503.5V616.2M898.6 503.5V616.2M940.5 503.5V616.2M982.4 503.5V616.2" stroke="#e05050" stroke-opacity=".5" stroke-width=".7" stroke-dasharray="1 1" fill="none"/>
<path d="M584.7 502.5V615.2" stroke="#777" stroke-width=".8" fill="none"/>
<path d="M582.7 614.6H1004" stroke="#444" stroke-width=".9" fill="none"/>
<path d="M582.7 505L584.7 501.5L586.7 505Z" fill="#8b1a1a"/>
<path d="M582.7 581.5H584.7M582.7 548.7H584.7M582.7 516H584.7" stroke="#666" stroke-width=".7" fill="none"/>
<g font-family='"DejaVu Sans Mono","Liberation Mono",monospace' fill="#222" fill-opacity=".88">
<text x="651.4" y="494.6" font-size="9.56">LPAR: 01LPAR10 : 13:00:00 25.11.2015 - 13:00:00 26.11.2015</text>
<text x="581" y="616.9" font-size="7.3" text-anchor="end">0</text>
<text x="581" y="584.2" font-size="7.3" text-anchor="end">1</text>
<text x="581" y="551.4" font-size="7.3" text-anchor="end">2</text>
<text x="581" y="518.7" font-size="7.3" text-anchor="end">3</text>
<text x="689.3" y="622.3" font-size="7.3" text-anchor="middle">Wed 18:00</text>
<text x="814.9" y="622.3" font-size="7.3" text-anchor="middle">Thu 00:00</text>
<text x="940.5" y="622.3" font-size="7.3" text-anchor="middle">Thu 06:00</text>
<text transform="translate(547.6 559.5) rotate(-90)" font-size="7.2" text-anchor="middle">CPU cores</text>
<text x="576.2" y="634.9" font-size="7.2">Average</text>
<rect x="547.9" y="637.6" width="5" height="5" fill="#00ee00" stroke="#222" stroke-width=".7"/>
<text x="561.5" y="643.4" font-size="7.2">Entitled processor cores</text><text x="684" y="643.4" font-size="7.2">3.00</text>
<rect x="547.9" y="646.2" width="5" height="5" fill="#ee0000" stroke="#222" stroke-width=".7"/>
<text x="561.5" y="652" font-size="7.2">Utilization in CPU cores</text><text x="684" y="652" font-size="7.2">0.05</text>
<text x="548.1" y="660.6" font-size="7.2">Entitled CPU utilization</text><text x="684" y="660.6" font-size="7.2">1.7 %</text>
</g></svg>
<!--/GRAPHS-->
</body>
</html>
